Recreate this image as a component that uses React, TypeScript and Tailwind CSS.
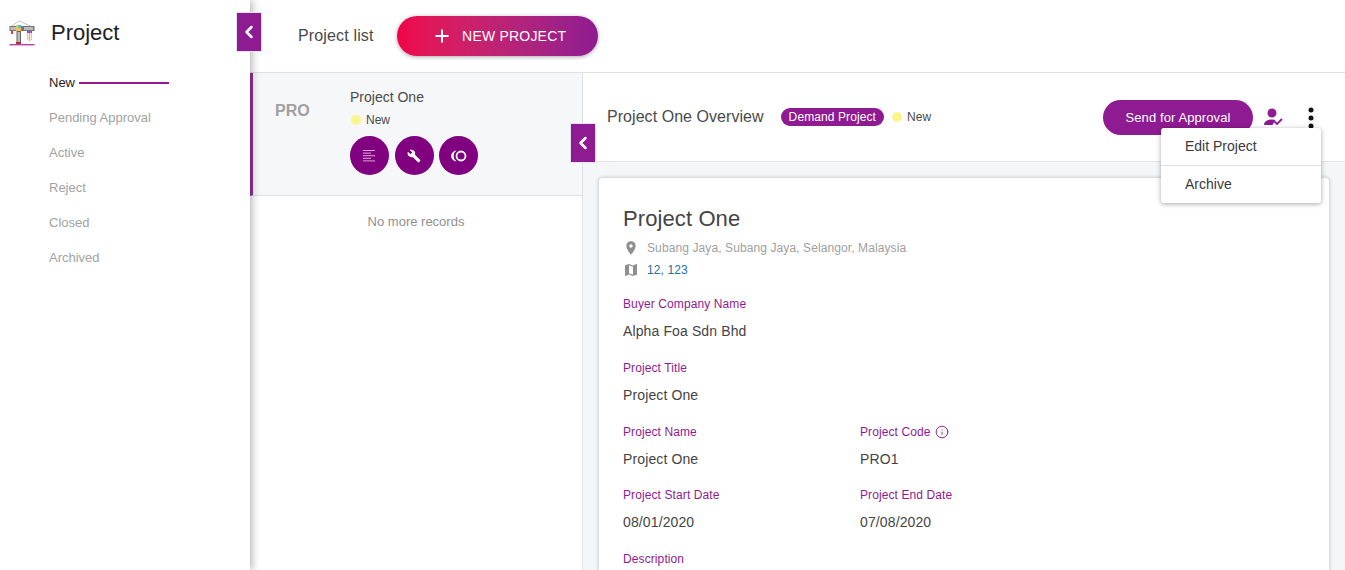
import React from 'react';
import { ChevronLeft, Plus, Info } from 'lucide-react';

const menu = ['Pending Approval', 'Active', 'Reject', 'Closed', 'Archived'];

function CraneLogo() {
  return (
    <svg width="26" height="26" viewBox="0 0 26 26" className="shrink-0">
      <path d="M10 1 L1.5 7 M10 1 L24 7" stroke="#999" strokeWidth="0.6" fill="none" />
      <rect x="0.5" y="6" width="25" height="5" fill="#777" />
      <rect x="1.5" y="7" width="6" height="3" fill="#bbb" />
      <rect x="15" y="7" width="9" height="3" fill="#bbb" />
      <rect x="7" y="5" width="5" height="6" fill="#f2c14e" />
      <rect x="9" y="5" width="3" height="3" fill="#58c4c4" />
      <rect x="2" y="11" width="2" height="3" fill="#e53935" />
      <rect x="7.5" y="11" width="4.5" height="12" fill="#666" />
      <rect x="8.5" y="12" width="2.5" height="10" fill="#bbb" />
      <rect x="18" y="11" width="5" height="2" fill="#9c4dcc" />
      <path d="M18.5 13 V20 M22.5 13 V20" stroke="#bbb" strokeWidth="0.8" />
      <path d="M20.5 13 V21" stroke="#f0a848" strokeWidth="1.4" />
      <rect x="7" y="22" width="5" height="2" fill="#a33" />
      <rect x="0.5" y="24" width="25" height="1.4" fill="#c13aa8" />
    </svg>
  );
}

function Field({ label, value, info }: { label: string; value: string; info?: boolean }) {
  return (
    <div className="w-[237px] shrink-0">
      <div className="flex items-center gap-[4px] h-[16px] text-[12px] tracking-[0.1px] text-[#8e1b91]">
        {label}
        {info && <Info className="h-[14px] w-[14px]" strokeWidth={1.6} />}
      </div>
      <div className="mt-[9px] h-[20px] text-[14px] leading-[20px] tracking-[0.12px] text-[#444]">{value}</div>
    </div>
  );
}

export default function App() {
  return (
    <div className="relative flex h-[570px] w-[1345px] overflow-hidden bg-white font-['Liberation_Sans',sans-serif]">
      {/* Left menu */}
      <aside className="relative z-20 w-[250px] shrink-0 bg-white shadow-[2px_0_8px_rgba(0,0,0,0.3)]">
        <div className="flex h-[65px] items-center gap-[16px] pl-[9px]">
          <CraneLogo />
          <span className="text-[22px] leading-[28px] text-[#222]">Project</span>
        </div>
        <nav className="pl-[49px] text-[13px]">
          <div className="flex h-[35px] items-center gap-[4px] text-[#222]">
            New
            <span className="h-[2px] w-[90px] bg-[#8e1b91]" />
          </div>
          {menu.map((m) => (
            <div key={m} className="flex h-[35px] items-center text-[#a2a2a2]">
              {m}
            </div>
          ))}
        </nav>
        <button className="absolute left-[236px] top-[12px] flex h-[40px] w-[26px] items-center justify-center border border-[#e3e3ee] bg-[#8e1b91] text-white">
          <ChevronLeft className="h-[20px] w-[20px]" strokeWidth={3} />
        </button>
      </aside>

      {/* Main */}
      <div className="flex min-w-0 flex-1 flex-col">
        <header className="flex h-[73px] shrink-0 items-center border-b border-[#dde0e4] pl-[48px]">
          <span className="text-[16px] tracking-[0.15px] text-[#4a4a4a]">Project list</span>
          <button className="ml-[23.5px] flex h-[40px] w-[201px] items-center justify-start gap-[10px] rounded-full bg-gradient-to-r from-[#f0024a] to-[#8e1b91] pl-[35px] text-[14px] tracking-[0.2px] text-white shadow-[0_1px_4px_rgba(0,0,0,0.35)]">
            <Plus className="h-[20px] w-[20px]" strokeWidth={2.4} />
            NEW PROJECT
          </button>
        </header>

        <div className="flex min-h-0 flex-1">
          {/* Project list */}
          <section className="w-[333px] shrink-0 border-r border-[#dde0e4]">
            <div className="flex h-[123px] border-b border-[#dde0e4] border-l-[3px] border-l-[#93359a] bg-[#f5f7f9]">
              <div className="w-[97px] pl-[22px] pt-[27px] text-[16px] font-bold leading-[22px] text-[#a0a0a0]">PRO</div>
              <div className="pt-[14px]">
                <div className="text-[14px] leading-[20px] text-[#4a4a4a]">Project One</div>
                <div className="ml-[1px] mt-[4px] flex h-[18px] items-center gap-[5px] text-[12px] text-[#4a4a4a]">
                  <span className="h-[10px] w-[10px] rounded-full bg-[#fdf48c]" />
                  New
                </div>
                <div className="mt-[7px] flex gap-[5.5px]">
                  <span className="flex h-[39px] w-[39px] items-center justify-center rounded-full bg-[#80007f]">
                    <svg width="14" height="12" viewBox="0 0 14 12" fill="#d9a8d8">
                      <rect x="0" y="0" width="12" height="1" />
                      <rect x="0" y="2.6" width="8" height="1" />
                      <rect x="0" y="5.2" width="12" height="1" />
                      <rect x="0" y="7.8" width="8" height="1" />
                      <rect x="0" y="10.4" width="12" height="1" />
                    </svg>
                  </span>
                  <span className="flex h-[39px] w-[39px] items-center justify-center rounded-full bg-[#80007f]">
                    <svg width="14" height="14" viewBox="0 0 24 24" fill="white">
                      <path d="M22.7 19l-9.1-9.1c.9-2.3.4-5-1.5-6.9-2-2-5-2.4-7.4-1.3L9 6 6 9 1.600 4.700C.4 7.100.9 10.100 2.900 12.100c1.900 1.900 4.600 2.400 6.900 1.500l9.100 9.100c.4.400 1 .4 1.400 0l2.300-2.300c.5-.4.500-1.100.100-1.400z" />
                    </svg>
                  </span>
                  <span className="flex h-[39px] w-[39px] items-center justify-center rounded-full bg-[#80007f]">
                    <svg width="17" height="12" viewBox="0 0 17 12" fill="white">
                      <circle cx="11" cy="6" r="4.500" fill="none" stroke="white" strokeWidth="1.800" />
                      <path d="M6.500 0.600 A5.400 5.400 0 0 0 6.500 11.400 A6.480 6.480 0 0 1 3.600 6 A6.480 6.480 0 0 1 6.500 0.600z" />
                    </svg>
                  </span>
                </div>
              </div>
            </div>
            <div className="mt-[17px] text-center text-[13px] leading-[18px] text-[#8f8f8f]">No more records</div>
          </section>

          {/* Overview */}
          <section className="relative flex min-w-0 flex-1 flex-col bg-[#f5f6f8]">
            <div className="flex h-[89px] shrink-0 border-b border-[#e2e4e8] bg-white pl-[24px] pr-[31px]">
              <div className="flex h-[88px] items-start pt-[33px]">
                <span className="text-[16px] leading-[22px] tracking-[0.05px] text-[#4a4a4a]">Project One Overview</span>
                <span className="ml-[17px] mt-[2px] flex h-[18px] items-center rounded-full bg-[#8e1b91] px-[8px] text-[12px] tracking-[0.1px] text-white">
                  Demand Project
                </span>
                <span className="ml-[8px] mt-[2px] flex h-[18px] items-center gap-[5px] text-[12px] text-[#4a4a4a]">
                  <span className="h-[10px] w-[10px] rounded-full bg-[#fdf48c]" />
                  New
                </span>
              </div>
              <div className="ml-auto flex items-start pt-[27px]">
                <button className="h-[35px] w-[150px] rounded-full bg-[#8e1b91] text-[13px] tracking-[0.1px] text-white">
                  Send for Approval
                </button>
                <svg className="ml-[10px] mt-[7px]" width="22" height="20" viewBox="0 0 22 20" fill="#8e1b91">
                  <circle cx="9" cy="6" r="4.500" />
                  <path d="M1 18 c0-4 4-5.500 8-5.500 1.500 0 2.500.2 3.500.5 L9.500 18z" />
                  <path d="M11.500 14.500 l2.500 2.500 5-5" fill="none" stroke="#8e1b91" strokeWidth="1.800" />
                </svg>
                <svg className="ml-[23px] mt-[7px]" width="6" height="22" viewBox="0 0 6 22" fill="#111">
                  <circle cx="3" cy="3" r="2.500" />
                  <circle cx="3" cy="11" r="2.500" />
                  <circle cx="3" cy="19" r="2.500" />
                </svg>
              </div>
            </div>

            <div className="ml-[16px] mr-[16px] mt-[16px] flex-1 rounded-t-[4px] bg-white pl-[24px] pt-[27px] shadow-[0_0_4px_rgba(0,0,0,0.25)]">
              <h1 className="text-[22px] leading-[28px] tracking-[0.1px] text-[#444]">Project One</h1>
              <div className="mt-[5px] flex h-[20px] items-center gap-[8px] text-[12px] tracking-[0.1px] text-[#a0a0a0]">
                <svg width="16" height="16" viewBox="0 0 24 24" fill="#8f8f8f">
                  <path d="M12 2C8.130 2 5 5.130 5 9c0 5.250 7 13 7 13s7-7.750 7-13c0-3.870-3.130-7-7-7zm0 9.500c-1.380 0-2.500-1.120-2.500-2.500s1.120-2.500 2.500-2.500 2.500 1.120 2.500 2.500-1.120 2.500-2.500 2.500z" />
                </svg>
                Subang Jaya, Subang Jaya, Selangor, Malaysia
              </div>
              <div className="mt-[2px] flex h-[20px] items-center gap-[8px] text-[12px] tracking-[0.1px] text-[#1f6f9e]">
                <svg width="16" height="16" viewBox="0 0 24 24" fill="#8f8f8f">
                  <path d="M20.500 3l-.16.03L15 5.100 9 3 3.360 4.900c-.21.07-.36.25-.36.48V20.500c0 .28.22.5.5.5l.16-.03L9 18.900l6 2.100 5.640-1.900c.21-.07.36-.25.36-.48V3.500c0-.28-.22-.5-.5-.5zM15 19l-6-2.110V5l6 2.110V19z" />
                </svg>
                12, 123
              </div>
              <div className="mt-[16.4px] flex flex-col gap-[18.6px]">
                <div className="flex"><Field label="Buyer Company Name" value="Alpha Foa Sdn Bhd" /></div>
                <div className="flex"><Field label="Project Title" value="Project One" /></div>
                <div className="flex">
                  <Field label="Project Name" value="Project One" />
                  <Field label="Project Code" value="PRO1" info />
                </div>
                <div className="flex">
                  <Field label="Project Start Date" value="08/01/2020" />
                  <Field label="Project End Date" value="07/08/2020" />
                </div>
                <div className="flex"><Field label="Description" value="" /></div>
              </div>
            </div>

            {/* Collapse button */}
            <button className="absolute -left-[13px] top-[50px] z-10 flex h-[40px] w-[26px] items-center justify-center border border-[#e3e3ee] bg-[#8e1b91] text-white">
              <ChevronLeft className="h-[20px] w-[20px]" strokeWidth={3} />
            </button>

            {/* Dropdown menu */}
            <div className="absolute left-[578px] top-[55px] z-20 w-[160px] rounded-[3px] bg-white text-[14px] text-[#3a3a3a] shadow-[0_1px_5px_rgba(0,0,0,0.35)]">
              <div className="flex h-[38px] items-center border-b border-[#e0e0e0] pl-[24px]">Edit Project</div>
              <div className="flex h-[37px] items-center pl-[24px]">Archive</div>
            </div>
          </section>
        </div>
      </div>
    </div>
  );
}
